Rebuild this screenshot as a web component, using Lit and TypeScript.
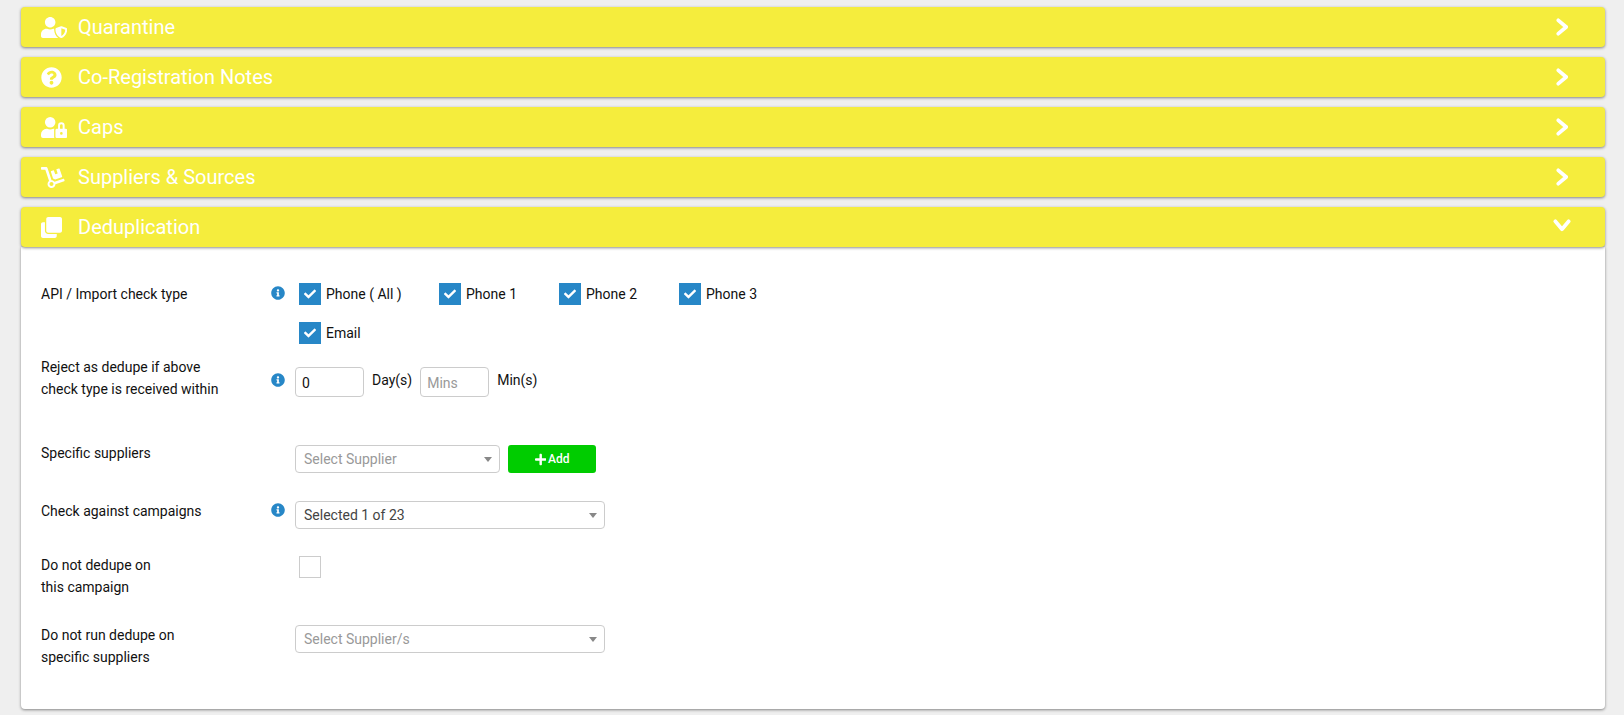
import { LitElement, html, css, svg } from "lit";
import { customElement } from "lit/decorators.js";

const P: Record<string, [number, string]> = {
  shield: [640, "M622.3 271.1l-115.2-45c-4.1-1.6-12.6-3.7-22.2 0l-115.2 45c-10.7 4.2-17.7 14-17.7 24.9 0 111.6 68.7 188.8 132.9 213.9 9.6 3.7 18 1.6 22.2 0C558.4 489.9 640 420.5 640 296c0-10.9-7-20.7-17.7-24.9zM496 462.4V273.3l95.5 37.3c-5.6 87.1-60.9 135.4-95.5 151.8zM224 256c70.7 0 128-57.3 128-128S294.7 0 224 0 96 57.3 96 128s57.3 128 128 128zm96 40c0-2.5.8-4.8 1.1-7.2-2.5-.1-4.9-.8-7.5-.8h-16.7c-22.2 10.2-46.9 16-72.9 16s-50.6-5.8-72.9-16h-16.7C60.2 288 0 348.2 0 422.4V464c0 26.5 21.5 48 48 48h352c6.8 0 13.3-1.5 19.2-4-54-42.9-99.2-116.7-99.2-212z"],
  question: [512, "M504 256c0 136.997-111.043 248-248 248S8 392.997 8 256C8 119.083 119.043 8 256 8s248 111.083 248 248zM262.655 90c-54.497 0-89.255 22.957-116.549 63.758-3.536 5.286-2.353 12.415 2.715 16.258l34.699 26.31c5.205 3.947 12.621 3.008 16.665-2.122 17.864-22.658 30.113-35.797 57.303-35.797 20.429 0 45.698 13.148 45.698 32.958 0 14.976-12.363 22.667-32.534 33.976C247.128 238.528 216 254.941 216 296v4c0 6.627 5.373 12 12 12h56c6.627 0 12-5.373 12-12v-1.333c0-28.462 83.186-29.647 83.186-106.667 0-58.002-60.165-102-116.531-102zM256 338c-25.365 0-46 20.635-46 46 0 25.364 20.635 46 46 46s46-20.636 46-46c0-25.365-20.635-46-46-46z"],
  lock: [640, "M224 256A128 128 0 1 0 96 128a128 128 0 0 0 128 128zm96 64a63.08 63.08 0 0 1 8.1-30.5c-4.8-.5-9.5-1.5-14.5-1.5h-16.7a174.08 174.08 0 0 1-145.8 0h-16.7A134.43 134.43 0 0 0 0 422.4V464a48 48 0 0 0 48 48h280.9a63.54 63.54 0 0 1-8.9-32zm288-32h-32v-80a80 80 0 0 0-160 0v80h-32a32 32 0 0 0-32 32v160a32 32 0 0 0 32 32h224a32 32 0 0 0 32-32V320a32 32 0 0 0-32-32zM496 432a32 32 0 1 1 32-32 32 32 0 0 1-32 32zm32-144h-64v-80a32 32 0 0 1 64 0z"],
  dolly: [576, "M294.2 277.7c18 5 34.7 13.4 49.5 24.7l161.5-53.8c8.4-2.8 12.9-11.9 10.1-20.2L454.9 47.2c-2.8-8.4-11.9-12.9-20.2-10.1l-61.1 20.4 33.1 99.4L346 177l-33.1-99.4-61.6 20.5c-8.4 2.8-12.9 11.9-10.1 20.2l53 159.4zm281 48.7L565 296c-2.8-8.4-11.9-12.9-20.2-10.1l-213.5 71.2c-17.2-22-43.6-36.4-73.5-37L158.4 21.9C154 8.8 141.8 0 128 0H16C7.2 0 0 7.2 0 16v32c0 8.8 7.2 16 16 16h88.9l92.2 276.7c-26.1 20.4-41.7 53.6-36 90.5 6.1 39.4 37.9 72.3 77.3 79.2 60.2 10.7 112.3-34.8 113.4-92.6l213.3-71.2c8.3-2.8 12.8-11.9 10.1-20.2zM256 464c-26.5 0-48-21.5-48-48s21.5-48 48-48 48 21.5 48 48-21.5 48-48 48z"],
  clone: [512, "M464 0c26.51 0 48 21.49 48 48v288c0 26.51-21.49 48-48 48H176c-26.51 0-48-21.49-48-48V48c0-26.51 21.49-48 48-48h288M176 416c-44.112 0-80-35.888-80-80V128H48c-26.51 0-48 21.49-48 48v288c0 26.51 21.49 48 48 48h288c26.51 0 48-21.49 48-48v-48H176z"],
  info: [512, "M256 8C119.043 8 8 119.083 8 256c0 136.997 111.043 248 248 248s248-111.003 248-248C504 119.083 392.957 8 256 8zm0 110c23.196 0 42 18.804 42 42s-18.804 42-42 42-42-18.804-42-42 18.804-42 42-42zm56 254c0 6.627-5.373 12-12 12h-88c-6.627 0-12-5.373-12-12v-24c0-6.627 5.373-12 12-12h12v-64h-12c-6.627 0-12-5.373-12-12v-24c0-6.627 5.373-12 12-12h64c6.627 0 12 5.373 12 12v100h12c6.627 0 12 5.373 12 12v24z"],
  plus: [448, "M416 208H272V64c0-17.67-14.33-32-32-32h-32c-17.67 0-32 14.33-32 32v144H32c-17.67 0-32 14.33-32 32v32c0 17.67 14.33 32 32 32h144v144c0 17.67 14.33 32 32 32h32c17.67 0 32-14.33 32-32V304h144c17.67 0 32-14.33 32-32v-32c0-17.67-14.33-32-32-32z"],
  check: [512, "M173.898 439.404l-166.4-166.4c-9.997-9.997-9.997-26.206 0-36.204l36.203-36.204c9.997-9.998 26.207-9.998 36.204 0L192 312.69 432.095 72.596c9.997-9.997 26.207-9.997 36.204 0l36.203 36.204c9.997 9.997 9.997 26.206 0 36.204l-294.4 294.401c-9.998 9.997-26.207 9.997-36.204-.001z"],
};

const icon = (n: string, cls = "") =>
  html`<svg class="ic ${cls}" viewBox="0 0 ${P[n][0]} 512" fill="currentColor">${svg`<path d=${P[n][1]}></path>`}</svg>`;

const chevRight = html`<svg class="ic cr" viewBox="0 0 12.5 18" fill="none" stroke="currentColor" stroke-width="3.7" stroke-linecap="round" stroke-linejoin="round">${svg`<polyline points="2.3,2.3 10.2,9 2.3,15.7"></polyline>`}</svg>`;
const chevDown = html`<svg class="ic cd" viewBox="0 0 18 12.5" fill="none" stroke="currentColor" stroke-width="3.7" stroke-linecap="round" stroke-linejoin="round">${svg`<polyline points="2.3,2.3 9,10.2 15.7,2.3"></polyline>`}</svg>`;

@customElement("app-root")
export class AppRoot extends LitElement {
  static styles = css`
    :host { display: block; background: #efefef; min-height: 715px; padding: 7px 19px 6px 21px; box-sizing: border-box;
      font-family: Roboto, "Liberation Sans", sans-serif; font-size: 14px; color: #111; }
    .ic { display: block; }
    .head { height: 40px; background: #f5ed3d; border-radius: 4px; display: flex; align-items: center; color: #fff;
      box-shadow: 0 1px 3px rgba(0,0,0,.45); padding: 0 34px 0 20px; margin-bottom: 10px; position: relative; }
    .head.open { margin-bottom: 0; }
    .hi { width: 37px; flex: none; display: flex; align-items: center; }
    .hi .ic { height: 21px; }
    .title { font-size: 20px; flex: 1; }
    .chev { width: 18px; display: flex; justify-content: center; }
    .cr { height: 18px; }
    .cd { width: 18px; margin-top: -3px; }
    .body { background: #fff; height: 462px; box-sizing: border-box; padding: 35px 19px 0 20px; border-radius: 0 0 4px 4px;
      box-shadow: 0 1px 3px rgba(0,0,0,.45); }
    .row { display: grid; grid-template-columns: 230px 24px 1fr; }
    .label { line-height: 22px; white-space: pre-line; }
    .r1 .label, .r3 .label, .r4 .label, .r2 .label { padding-top: 1px; }
    .tip { color: #2787c7; }
    .tip .ic { height: 14px; }
    .r1 { height: 73px; } .r2 { height: 86px; } .r3 { height: 58px; } .r4 { height: 55px; } .r5 { height: 70px; }
    .r1 .tip { padding-top: 4px; }
    .r2 .tip { padding-top: 18px; }
    .r4 .tip { padding-top: 4px; }
    .checks { display: grid; grid-template-columns: 140px 120px 120px 120px; row-gap: 17px; padding: 1px 0 0 4px; align-content: start; }
    .chk { display: flex; align-items: center; gap: 5px; height: 22px; }
    .box { width: 22px; height: 22px; background: #2787c7; color: #fff; display: flex; align-items: center; justify-content: center; flex: none; }
    .box .ic { height: 12px; }
    .box.off { background: #fff; box-sizing: border-box; border: 1px solid #ccc; }
    .inline { display: flex; align-items: flex-start; padding-top: 12px; gap: 8px; }
    .inp { width: 69px; height: 30px; box-sizing: border-box; border: 1px solid #ccc; border-radius: 4px; padding: 0 6px; line-height: 30px; }
    .unit { line-height: 26px; }
    .ctrl { display: flex; gap: 8px; align-items: flex-start; }
    .r3 .ctrl { padding-top: 4px; } .r4 .ctrl { padding-top: 2px; } .r6 .ctrl { padding-top: 1px; }
    .r5 .ctrl { padding: 2px 0 0 4px; }
    .sel { height: 28px; box-sizing: border-box; border: 1px solid #ccc; border-radius: 4px; display: flex; align-items: center;
      justify-content: space-between; padding: 0 7px 0 8px; color: #444; }
    .sel.w1 { width: 205px; } .sel.w2 { width: 310px; }
    .sel::after { content: ""; border: 4px solid transparent; border-top: 5px solid #888; border-bottom: 0; }
    .inp.ph, .sel.ph { color: #999; }
    .add { width: 88px; height: 28px; background: #00cc00; color: #fff; border-radius: 3px; display: flex; align-items: center;
      justify-content: center; gap: 2px; font-size: 12px; font-weight: 500; }
    .add .ic { height: 13px; }
  `;

  private head(ic: string, t: string, open = false) {
    return html`<div class="head ${open ? "open" : ""}">
      <div class="hi">${icon(ic)}</div>
      <div class="title">${t}</div>
      <div class="chev">${open ? chevDown : chevRight}</div>
    </div>`;
  }

  private chk(t: string) {
    return html`<div class="chk"><span class="box">${icon("check")}</span><span>${t}</span></div>`;
  }

  render() {
    const tip = html`<div class="tip">${icon("info")}</div>`;
    return html`
      ${this.head("shield", "Quarantine")}
      ${this.head("question", "Co-Registration Notes")}
      ${this.head("lock", "Caps")}
      ${this.head("dolly", "Suppliers & Sources")}
      ${this.head("clone", "Deduplication", true)}
      <div class="body">
        <div class="row r1">
          <div class="label">API / Import check type</div>${tip}
          <div class="checks">
            ${this.chk("Phone ( All )")}${this.chk("Phone 1")}${this.chk("Phone 2")}${this.chk("Phone 3")}${this.chk("Email")}
          </div>
        </div>
        <div class="row r2">
          <div class="label">Reject as dedupe if above
check type is received within</div>${tip}
          <div class="inline">
            <div class="inp">0</div><div class="unit">Day(s)</div>
            <div class="inp ph">Mins</div><div class="unit">Min(s)</div>
          </div>
        </div>
        <div class="row r3">
          <div class="label">Specific suppliers</div><div></div>
          <div class="ctrl"><div class="sel w1 ph">Select Supplier</div><div class="add">${icon("plus")}Add</div></div>
        </div>
        <div class="row r4">
          <div class="label">Check against campaigns</div>${tip}
          <div class="ctrl"><div class="sel w2">Selected 1 of 23</div></div>
        </div>
        <div class="row r5">
          <div class="label">Do not dedupe on
this campaign</div><div></div>
          <div class="ctrl"><span class="box off"></span></div>
        </div>
        <div class="row r6">
          <div class="label">Do not run dedupe on
specific suppliers</div><div></div>
          <div class="ctrl"><div class="sel w2 ph">Select Supplier/s</div></div>
        </div>
      </div>
    `;
  }
}
